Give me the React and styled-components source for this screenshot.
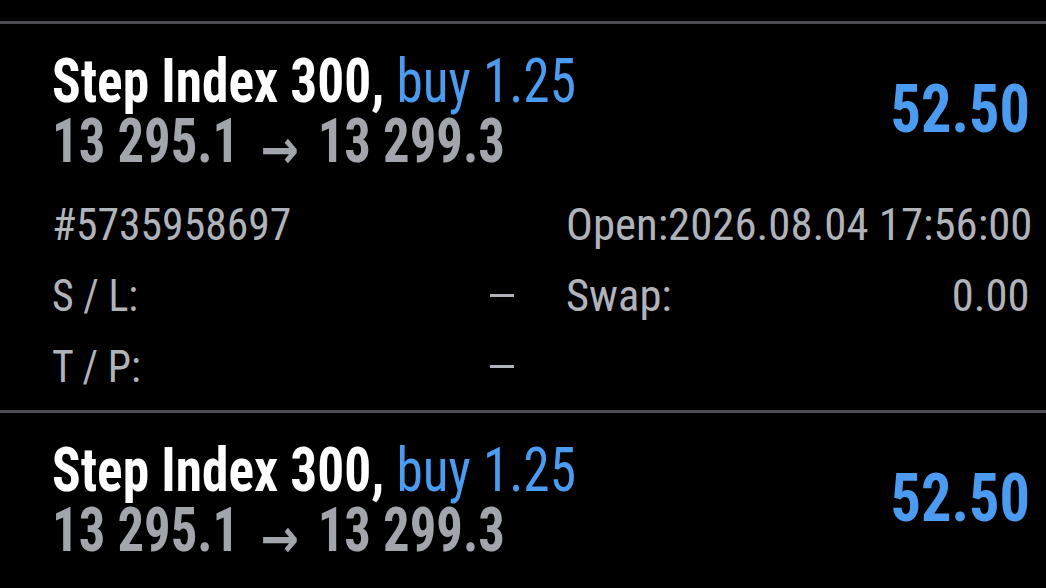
import React from "react";
import styled, { createGlobalStyle } from "styled-components";

const GlobalStyle = createGlobalStyle`
  html, body {
    margin: 0;
    padding: 0;
    background: #000;
  }
  body {
    font-family: "Roboto Condensed", Roboto, "Noto Sans", sans-serif;
    color: #fff;
  }
`;

const Page = styled.div`
  background: #000;
  width: 1046px;
  height: 588px;
  overflow: hidden;
  padding-top: 21px;
  box-sizing: border-box;
`;

const Divider = styled.div`
  height: 3px;
  background: #4c4c54;
`;

const Item = styled.section`
  padding: 27px 16px ${(p) => (p.$expanded ? "8px" : "0")} 52px;
`;

const Header = styled.div`
  display: flex;
  align-items: center;
  justify-content: space-between;
`;

const TitleBlock = styled.div`
  display: flex;
  flex-direction: column;
  align-items: flex-start;
`;

/* Roboto Condensed is not installed: the condensed look is squeezed from Roboto */
const TitleLine = styled.div`
  font-size: 62px;
  line-height: 60px;
  height: 60px;
  white-space: nowrap;
  transform: scaleX(0.86);
  transform-origin: left center;
`;

const Symbol = styled.span`
  font-weight: 700;
  color: #ffffff;
`;

const Side = styled.span`
  font-weight: 400;
  color: #4b9cf1;
`;

const PriceLine = styled.div`
  font-size: 62px;
  line-height: 60px;
  height: 60px;
  font-weight: 700;
  color: #a2a6ac;
  white-space: nowrap;
  transform: scaleX(0.85);
  transform-origin: left center;
`;

const Arrow = styled.span`
  display: inline-block;
  font-family: "DejaVu Sans", sans-serif;
  font-weight: 700;
  font-size: 54px;
  line-height: 30px;
  margin: 0 22px 0 25px;
  vertical-align: -6px;
`;

const Profit = styled.div`
  font-size: 67px;
  line-height: 65px;
  font-weight: 700;
  color: #4b9cf1;
  margin-bottom: 4px;
  transform: scaleX(0.9);
  transform-origin: right center;
`;

const Details = styled.div`
  display: grid;
  grid-template-columns: 462px minmax(0, 1fr);
  column-gap: 52px;
  margin-top: 18px;
  font-size: 45px;
  line-height: 71px;
  color: #b0b4ba;
`;

const Field = styled.div`
  display: flex;
  justify-content: space-between;
  white-space: nowrap;
  height: 71px;
`;

const Label = styled.span`
  display: inline-block;
  transform: scaleX(${(p) => p.$k ?? 1});
  transform-origin: left center;
`;

const Value = styled.span`
  display: inline-block;
  transform: scaleX(${(p) => p.$k ?? 1});
  transform-origin: right center;
`;

const Dash = styled.span`
  display: inline-block;
  width: 24px;
  height: 3px;
  margin-top: 34px;
  background: #b0b4ba;
`;

const positions = [
  {
    symbol: "Step Index 300,",
    side: "buy 1.25",
    open: "13 295.1",
    close: "13 299.3",
    profit: "52.50",
    expanded: true,
    ticket: "#5735958697",
    time: "Open:2026.08.04 17:56:00",
    swap: "0.00",
  },
  {
    symbol: "Step Index 300,",
    side: "buy 1.25",
    open: "13 295.1",
    close: "13 299.3",
    profit: "52.50",
    expanded: false,
  },
];

function Position({ p }) {
  return (
    <Item $expanded={p.expanded}>
      <Header>
        <TitleBlock>
          <TitleLine>
            <Symbol>{p.symbol}</Symbol> <Side>{p.side}</Side>
          </TitleLine>
          <PriceLine>
            {p.open}
            <Arrow>→</Arrow>
            {p.close}
          </PriceLine>
        </TitleBlock>
        <Profit>{p.profit}</Profit>
      </Header>
      {p.expanded && (
        <Details>
          <Field>
            <Label $k={0.97}>{p.ticket}</Label>
          </Field>
          <Field>
            <Label $k={0.995}>{p.time}</Label>
          </Field>
          <Field>
            <Label $k={0.93}>S / L:</Label>
            <Dash title="—" />
          </Field>
          <Field>
            <Label $k={0.99}>Swap:</Label>
            <Value $k={0.99}>{p.swap}</Value>
          </Field>
          <Field>
            <Label $k={0.93}>T / P:</Label>
            <Dash title="—" />
          </Field>
          <Field />
        </Details>
      )}
    </Item>
  );
}

export default function App() {
  return (
    <Page>
      <GlobalStyle />
      {positions.map((p, i) => (
        <React.Fragment key={i}>
          <Divider />
          <Position p={p} />
        </React.Fragment>
      ))}
    </Page>
  );
}
